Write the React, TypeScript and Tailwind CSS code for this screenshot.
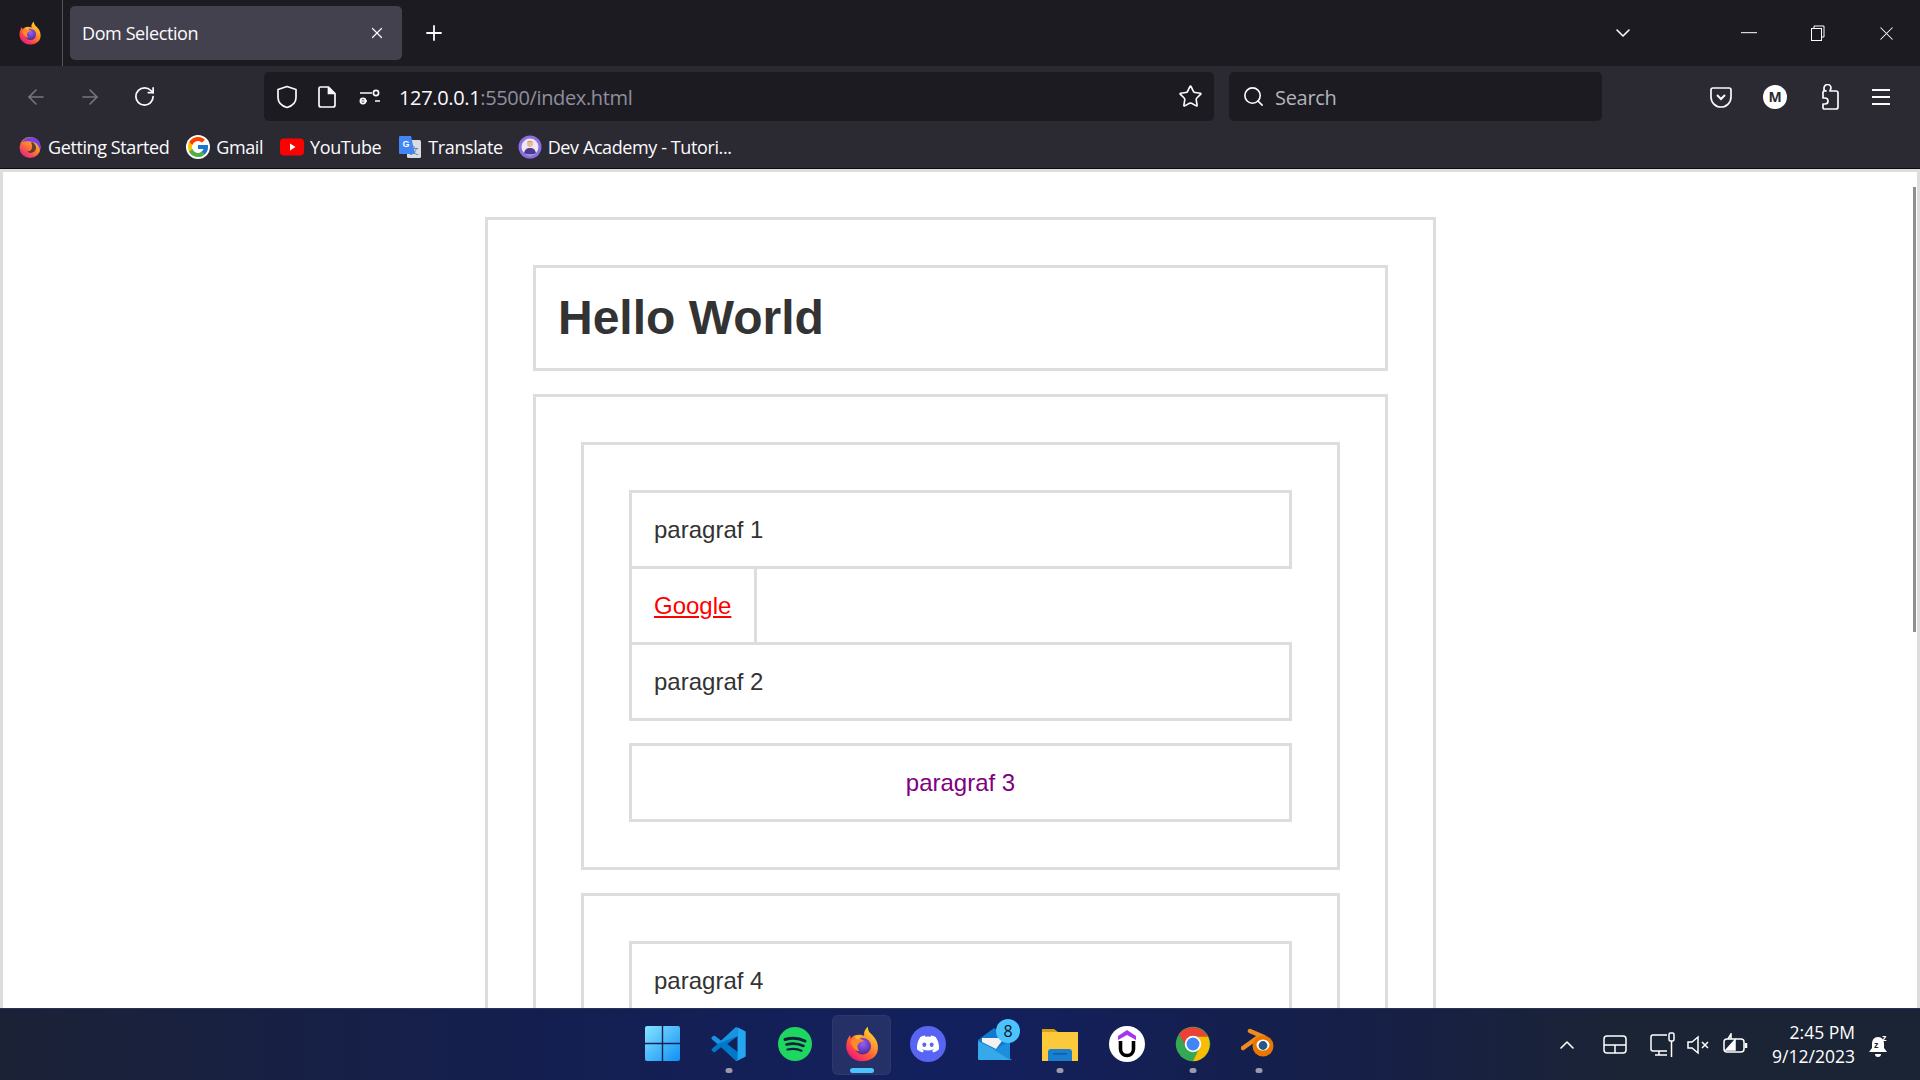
import { ArrowLeft, ArrowRight, ChevronDown, ChevronUp, Plus, RotateCw, Search, Star, X } from "lucide-react";
import { FaDiscord } from "react-icons/fa";
import { FcGoogle } from "react-icons/fc";
import type { ReactNode } from "react";

const UI_FONT = "font-['Open_Sans','Noto_Sans',sans-serif]";

function FirefoxLogo({ id, size = 24 }: { id: string; size?: number }) {
  return (
    <svg width={size} height={size} viewBox="0 0 48 48">
      <defs>
        <linearGradient id={`${id}a`} x1="0.85" y1="0.05" x2="0.2" y2="0.95">
          <stop offset="0" stopColor="#ffe226" />
          <stop offset="0.35" stopColor="#ff9a2e" />
          <stop offset="0.7" stopColor="#ff4f3f" />
          <stop offset="1" stopColor="#e8177f" />
        </linearGradient>
        <radialGradient id={`${id}b`} cx="0.5" cy="0.35" r="0.7">
          <stop offset="0" stopColor="#9a5cff" />
          <stop offset="1" stopColor="#45278d" />
        </radialGradient>
      </defs>
      <path d="M32 1c-1 7 5 9 9 15 5 7 5 15 3 20-3 7-11 11-20 11C12 47 3 38 3 27c0-6 2-11 5-15l1 5c2-3 5-5 8-5 4-1 7 0 10 1-1-5 1-9 5-12Z" fill={`url(#${id}a)`} />
      <circle cx="25" cy="27" r="11" fill={`url(#${id}b)`} />
      <path d="M9 20c3-3 7-4 11-3 3 0 6 2 8 4-4-1-7 0-9 3-2 3-1 7 2 10-6-1-11-6-12-14Z" fill="#ff8a2a" />
      <path d="M14 14c2-1 6-2 9-1l-3 5-4-1Z" fill="#ffb52e" />
    </svg>
  );
}

function GettingStartedIcon() {
  return (
    <svg width="24" height="24" viewBox="0 0 24 24">
      <defs>
        <linearGradient id="gs" x1="0.8" y1="0.1" x2="0.2" y2="0.9">
          <stop offset="0" stopColor="#ffc02e" />
          <stop offset="0.5" stopColor="#ff7a30" />
          <stop offset="1" stopColor="#e8267f" />
        </linearGradient>
      </defs>
      <circle cx="12" cy="12.5" r="10.5" fill="url(#gs)" />
      <path d="M4 7c3-5 12-7 17-1 2 3 2 7 1 9-1-4-3-7-7-8-4-1-8-1-11 0Z" fill="#7542e5" />
      <path d="M14 7c4 2 5 6 3 9-2 2-6 3-8 0 3 1 5-1 5-4 0-2 0-3-1-4Z" fill="#2b2a33" opacity="0.75" />
    </svg>
  );
}

function YoutubeIcon() {
  return (
    <svg width="24" height="18" viewBox="0 0 24 18">
      <rect width="24" height="17" y="0.5" rx="4" fill="#f00" />
      <path d="M10 5.5v7l5.5-3.5Z" fill="#fff" />
    </svg>
  );
}

function TranslateIcon() {
  return (
    <svg width="24" height="24" viewBox="0 0 24 24">
      <rect x="9" y="5" width="14" height="18" rx="1.5" fill="#d9dde3" />
      <text x="16" y="19" fontSize="9" fill="#6b7280" textAnchor="middle" fontFamily="'Noto Sans CJK SC',sans-serif">文</text>
      <path d="M2 1h11l4 18H2a1 1 0 0 1-1-1V2a1 1 0 0 1 1-1Z" fill="#4285f4" />
      <text x="8" y="12" fontSize="9" fontWeight="700" fill="#fff" textAnchor="middle" fontFamily="'Liberation Sans',sans-serif">G</text>
    </svg>
  );
}

function DevAcademyIcon() {
  return (
    <svg width="24" height="24" viewBox="0 0 24 24">
      <circle cx="12" cy="12" r="11.5" fill="#8b6fe0" />
      <circle cx="12" cy="12" r="8.5" fill="#efe6f5" />
      <circle cx="12" cy="9" r="3" fill="#e8b998" />
      <path d="M9 8c0-3 6-3 6 0l-1-1h-4Z" fill="#c9a24a" />
      <path d="M6 18c1-4 3-5 6-5s5 1 6 5c-3 2-9 2-12 0Z" fill="#4b3a8f" />
    </svg>
  );
}

function Bookmark({ icon, label, className }: { icon: ReactNode; label: string; className: string }) {
  return (
    <div className={`flex h-[28px] items-center ${className}`}>
      <span className="flex w-[24px] items-center justify-center">{icon}</span>
      <span className="ml-[6px] whitespace-nowrap text-[18px] leading-none tracking-[-0.4px] text-[#fbfbfe]">{label}</span>
    </div>
  );
}

function TitleBar() {
  return (
    <div className="flex h-[66px] items-center bg-[#1c1b22] text-[#fbfbfe]">
      <div className="flex h-full w-[63px] items-center justify-center border-r border-[#55545c] pr-[3px]">
        <FirefoxLogo id="ffmenu" size={24} />
      </div>
      <div className="ml-[7px] flex h-[54px] w-[332px] items-center rounded-[5px] bg-[#42414d] pl-[12px] pr-[16px]">
        <span className="flex-1 text-[18px] tracking-[-0.4px]">Dom Selection</span>
        <X size={18} strokeWidth={1.6} />
      </div>
      <Plus className="ml-[20px]" size={24} strokeWidth={1.8} />
      <div className="ml-auto flex items-center">
        <ChevronDown size={24} strokeWidth={1.6} />
        <svg className="ml-[106px]" width="16" height="2" viewBox="0 0 16 2">
          <rect width="16" height="1.2" fill="#d8d8dc" />
        </svg>
        <svg className="ml-[53px]" width="16" height="16" viewBox="0 0 16 16" fill="none" stroke="#fff" strokeWidth="1">
          <rect x="1.5" y="3.5" width="10" height="12" />
          <path d="M4 3.5v-2.5h10v11h-2.5" />
        </svg>
        <X className="ml-[49px] mr-[22px]" size={23} strokeWidth={1.1} />
      </div>
    </div>
  );
}

function Toolbar() {
  return (
    <div className={`flex h-[103px] flex-col border-b border-[#0c0c10] bg-[#2b2a33] ${UI_FONT}`}>
      <div className="flex h-[61px] items-center text-[#fbfbfe]">
        <ArrowLeft className="ml-[24px] text-[#77767e]" size={24} strokeWidth={1.6} />
        <ArrowRight className="ml-[30px] text-[#77767e]" size={24} strokeWidth={1.6} />
        <RotateCw className="ml-[31px]" size={23} strokeWidth={1.8} />
        <div className="ml-[108px] flex h-[49px] w-[950px] items-center rounded-[5px] bg-[#1c1b22] pl-[12px] pr-[11px]">
          <svg width="22" height="24" viewBox="0 0 22 24" fill="none" stroke="#fbfbfe" strokeWidth="1.7">
            <path d="M11 1.5 20 4.5v8c0 5-4 8.5-9 10-5-1.5-9-5-9-10v-8Z" strokeLinejoin="round" />
          </svg>
          <svg className="ml-[20px]" width="18" height="22" viewBox="0 0 18 22" fill="none" stroke="#fbfbfe" strokeWidth="1.7">
            <path d="M2.5 1h8L17 7.5V19a2 2 0 0 1-2 2H3a2 2 0 0 1-2-2V2.5A1.5 1.5 0 0 1 2.5 1Z" />
            <path d="M10.5 1v6.5H17" fill="#fbfbfe" />
          </svg>
          <svg className="ml-[23px]" width="22" height="18" viewBox="0 0 22 18" fill="none" stroke="#fbfbfe" strokeWidth="1.7">
            <path d="M1 5h12M1 13h7M16 13h5" />
            <circle cx="17" cy="5" r="2.6" />
            <circle cx="4" cy="13" r="2.6" />
          </svg>
          <span className="ml-[18px] pt-[2px] text-[20px] tracking-[-0.35px]">
            127.0.0.1<span className="text-[#8f8f9d]">:5500/index.html</span>
          </span>
          <Star className="ml-auto" size={25} strokeWidth={1.6} />
        </div>
        <div className="ml-[15px] flex h-[49px] w-[373px] items-center rounded-[5px] bg-[#1c1b22] pl-[13px]">
          <Search size={23} strokeWidth={1.7} />
          <span className="ml-[10px] pt-[2px] text-[20px] tracking-[-0.3px] text-[#b4b4bb]">Search</span>
        </div>
        <svg className="ml-[108px]" width="22" height="22" viewBox="0 0 22 22" fill="none" stroke="#fbfbfe" strokeWidth="1.7">
          <path d="M3 2h16a2 2 0 0 1 2 2v7a10 10 0 0 1-20 0V4a2 2 0 0 1 2-2Z" />
          <path d="m7 9 4 4 4-4" strokeWidth="2" />
        </svg>
        <div className="ml-[31px] flex h-[24px] w-[24px] items-center justify-center rounded-full bg-white text-[14px] font-bold leading-none text-[#2b2a33]">M</div>
        <svg className="ml-[30px]" width="22" height="26" viewBox="0 0 22 26" fill="none" stroke="#fbfbfe" strokeWidth="1.7" strokeLinejoin="round">
          <path d="M9 7H7V4a3.5 3.5 0 0 1 7 0v0l-1 3h6a2 2 0 0 1 2 2v14a2 2 0 0 1-2 2H7a1.5 1.5 0 0 1-1-1v-4h2a2.5 2.5 0 0 0 0-6H6V9a2 2 0 0 1 3-2Z" />
        </svg>
        <svg className="ml-[32px]" width="20" height="18" viewBox="0 0 20 18" fill="none" stroke="#fbfbfe" strokeWidth="2">
          <path d="M1 2h18M1 9h18M1 16h18" />
        </svg>
      </div>
      <div className="flex h-[41px] items-start pl-[18px] pt-[6px]">
        <Bookmark icon={<GettingStartedIcon />} label="Getting Started" className="" />
        <Bookmark icon={<FcGoogle size={24} className="rounded-full bg-white" />} label="Gmail" className="ml-[17px]" />
        <Bookmark icon={<YoutubeIcon />} label="YouTube" className="ml-[17px]" />
        <Bookmark icon={<TranslateIcon />} label="Translate" className="ml-[17px]" />
        <Bookmark icon={<DevAcademyIcon />} label="Dev Academy - Tutori..." className="ml-[15px]" />
      </div>
    </div>
  );
}

function Box({ children, className = "" }: { children: ReactNode; className?: string }) {
  return <div className={`border-[3px] border-[#ddd] p-[45px] ${className}`}>{children}</div>;
}

function Paragraf({ children, className = "" }: { children: ReactNode; className?: string }) {
  return <p className={`border-[3px] border-[#ddd] px-[22px] py-[23px] text-[24px] leading-[27px] ${className}`}>{children}</p>;
}

function Page() {
  return (
    <main className="relative min-h-0 flex-1 overflow-hidden border-x-[3px] border-t-[3px] border-[#ddd] bg-white pt-[45px] font-['Liberation_Sans',Arial,sans-serif] text-[#333]">
      <Box className="ml-[482px] w-[951px]">
        <div className="border-[3px] border-[#ddd] px-[22px] py-[22px]">
          <h1 className="text-[48px] font-bold leading-[56px]">Hello World</h1>
        </div>
        <Box className="mt-[23px]">
          <Box>
            <Paragraf>paragraf 1</Paragraf>
            <div className="flex h-[73px] border-l-[3px] border-[#ddd]">
              <a className="flex w-[125px] items-center border-r-[3px] border-[#ddd] pl-[22px] text-[24px] text-[#f00] underline">Google</a>
            </div>
            <Paragraf>paragraf 2</Paragraf>
            <Paragraf className="mt-[22px] text-center text-[#800080]">paragraf 3</Paragraf>
          </Box>
          <Box className="mt-[23px]">
            <Paragraf>paragraf 4</Paragraf>
          </Box>
        </Box>
      </Box>
      {/* Scrollbar thumb */}
      <div className="absolute right-[1px] top-[15px] h-[445px] w-[3px] bg-[#8f8f8f]" />
    </main>
  );
}

function VsCodeIcon() {
  return (
    <svg width="36" height="36" viewBox="0 0 100 100">
      <path fillRule="evenodd" d="M96 15 74 4a6 6 0 0 0-7 1L28 41 11 28a4 4 0 0 0-5 0l-3 3a4 4 0 0 0 0 6l15 13L3 63a4 4 0 0 0 0 6l3 3a4 4 0 0 0 5 0l17-13 39 36a6 6 0 0 0 7 1l22-11ZM74 28 45 50l29 22Z" fill="#0078c8" />
      <path fillRule="evenodd" d="M74 4l22 11v70L74 96a6 6 0 0 1-7-1c3 2 7 0 7-3Z" fill="#24a7f0" />
      <path d="M67 5 28 41 11 28a4 4 0 0 0-5 0l-3 3a4 4 0 0 0 0 6l15 13 56-22V8c0-3-4-5-7-3Z" fill="#1a94e0" />
    </svg>
  );
}

function SpotifyIcon() {
  return (
    <svg width="34" height="34" viewBox="0 0 34 34" fill="none" stroke="#14203f" strokeLinecap="round">
      <circle cx="17" cy="17" r="17" fill="#1ed760" stroke="none" />
      <path d="M7 12.5c7-2 14-1.5 20 1.5" strokeWidth="3" />
      <path d="M8.5 17.5c6-1.5 12-1 17 1.5" strokeWidth="2.6" />
      <path d="M9.5 22.5c5-1 10-.8 14 1.2" strokeWidth="2.2" />
    </svg>
  );
}

function MailIcon() {
  return (
    <div className="relative h-[36px] w-[36px]">
      <svg width="36" height="36" viewBox="0 0 36 36">
        <path d="M2 14 18 2l16 12v19H2Z" fill="#1379cc" />
        <path d="M6 12h22l-8 11-14-7Z" fill="#f2f2f2" />
        <path d="M2 15 20 24 36 34H3a1 1 0 0 1-1-1Z" fill="#35a9ea" />
        <path d="M34 15 18 24l16 10Z" fill="#1b8fdd" />
      </svg>
      <span className="absolute right-[-8px] top-[-7px] flex h-[24px] w-[24px] items-center justify-center rounded-full bg-[#4cc2ff] text-[16px] leading-none text-[#10141f]">8</span>
    </div>
  );
}

function FolderIcon() {
  return (
    <svg width="36" height="36" viewBox="0 0 36 36">
      <path d="M0 3h12l4 3h20v6H0Z" fill="#d69f12" />
      <path d="M0 6h36v29H0Z" fill="#fcc83c" />
      <path d="M6 26a3 3 0 0 1 3-3h18a3 3 0 0 1 3 3v9H6Z" fill="#1b7fd0" />
      <rect x="11" y="27" width="14" height="1.6" fill="#0e5fa6" />
    </svg>
  );
}

function UdemyIcon() {
  return (
    <svg width="36" height="36" viewBox="0 0 36 36" fill="none">
      <circle cx="18" cy="18" r="18" fill="#fff" />
      <path d="M18 4l9 6v4l-9-5-9 5v-4Z" fill="#a435f0" />
      <path d="M11.5 15v8c0 4 3 6.5 6.5 6.5s6.5-2.5 6.5-6.5v-8" stroke="#000" strokeWidth="3.6" />
    </svg>
  );
}

function ChromeIcon() {
  return (
    <svg width="36" height="36" viewBox="0 0 48 48">
      <circle cx="24" cy="24" r="23" fill="#34a853" />
      <path d="M24 14h19.9A23 23 0 0 1 24 47l8.7-18A10 10 0 0 0 24 14Z" fill="#fbbc04" />
      <path d="M24 14h19.9A23 23 0 0 0 5.2 10.8L15.3 29A10 10 0 0 1 24 14Z" fill="#ea4335" />
      <circle cx="24" cy="24" r="11" fill="#fff" />
      <circle cx="24" cy="24" r="8.6" fill="#4285f4" />
    </svg>
  );
}

function BlenderIcon() {
  return (
    <svg width="36" height="36" viewBox="0 0 36 36" fill="none">
      <path d="M2 22 16 12M9 5l14 6" stroke="#ef8a1f" strokeWidth="4.5" strokeLinecap="round" />
      <circle cx="22" cy="20" r="10.5" fill="#ea7600" />
      <ellipse cx="22" cy="19" rx="6.5" ry="5.6" fill="#fff" />
      <circle cx="22" cy="19.5" r="4.4" fill="#265787" />
    </svg>
  );
}

function WindowsIcon() {
  return (
    <svg width="35" height="35" viewBox="0 0 35 35">
      <defs>
        <linearGradient id="win" x1="0" y1="0" x2="1" y2="1">
          <stop offset="0" stopColor="#86e3ff" />
          <stop offset="1" stopColor="#0f90f5" />
        </linearGradient>
      </defs>
      <path d="M2 0h14.8v16.8H0V2a2 2 0 0 1 2-2ZM18.2 0H33a2 2 0 0 1 2 2v14.8H18.2ZM0 18.2h16.8V35H2a2 2 0 0 1-2-2ZM18.2 18.2H35V33a2 2 0 0 1-2 2H18.2Z" fill="url(#win)" />
    </svg>
  );
}

function TaskbarItem({ children, dot, active }: { children: ReactNode; dot?: boolean; active?: boolean }) {
  return (
    <div className="relative flex h-[60px] w-[66.3px] items-center justify-center">
      {active && <span className="absolute inset-y-0 left-[4px] right-[4px] rounded-[6px] border border-[#ffffff0a] bg-[#ffffff14]" />}
      <span className="relative -translate-y-[1px]">{children}</span>
      {dot && <span className="absolute bottom-[2px] left-1/2 h-[5px] w-[7px] -translate-x-1/2 rounded-full bg-[#9a9aa8]" />}
      {active && <span className="absolute bottom-[2px] left-1/2 h-[5px] w-[24px] -translate-x-1/2 rounded-full bg-[#4cc2ff]" />}
    </div>
  );
}

function Tray() {
  return (
    <div className="flex items-center justify-end text-white">
      <ChevronUp size={24} strokeWidth={1.6} />
      <svg className="ml-[24px]" width="24" height="19" viewBox="0 0 24 19" fill="none" stroke="#fff" strokeWidth="1.5">
        <rect x="1" y="1" width="22" height="17" rx="3" />
        <path d="M1 10h22M12 10v8" />
      </svg>
      <svg className="ml-[23px]" width="26" height="26" viewBox="0 0 26 26" fill="none" stroke="#fff" strokeWidth="1.5">
        <path d="M17 3H3a2 2 0 0 0-2 2v12a2 2 0 0 0 2 2h14M9 19v4M5 23h12" />
        <rect x="19" y="1" width="5" height="8" rx="1.5" />
        <path d="M21.5 9v16" />
      </svg>
      <svg className="ml-[11px]" width="24" height="20" viewBox="0 0 24 20" fill="none" stroke="#fff" strokeWidth="1.5">
        <path d="M1 7v6h4l6 5V2L5 7Z" />
        <path d="m15 7 6 6m0-6-6 6" />
      </svg>
      <svg className="ml-[12px]" width="26" height="24" viewBox="0 0 26 24" fill="none" stroke="#fff" strokeWidth="1.5">
        <rect x="1" y="6" width="20" height="13" rx="3" />
        <path d="M23 10v5" strokeWidth="2.5" />
        <path d="M3 17 12 7v10Z" fill="#fff" />
        <path d="M5 6 8 1v5" />
      </svg>
      <div className={`ml-[10px] w-[96px] -translate-y-[1px] text-right text-[17.5px] leading-[24px] ${UI_FONT}`}>
        <div>2:45 PM</div>
        <div>9/12/2023</div>
      </div>
      <svg className="ml-[13px] mr-[30px]" width="22" height="24" viewBox="0 0 22 24">
        <path d="M10 4c-4 0-6 3-6 7v4l-3 4h18l-3-4v-4c0-4-2-7-6-7Z" fill="#fff" />
        <path d="M7 21h6a3 3 0 0 1-6 0Z" fill="#fff" />
        <text x="6" y="15" fontSize="9" fontWeight="700" fill="#1a2333" fontFamily="'Liberation Sans',sans-serif">z</text>
        <text x="14" y="8" fontSize="9" fontWeight="700" fill="#fff" fontFamily="'Liberation Sans',sans-serif">z</text>
      </svg>
    </div>
  );
}

function Taskbar() {
  return (
    <footer className="grid h-[72px] grid-cols-[1fr_auto_1fr] items-center border-t border-[#2a3458] bg-[linear-gradient(90deg,#1b2236_0%,#141f50_28%,#12205e_50%,#161f48_70%,#1b2434_85%)]">
      <div />
      <div className="ml-[2px] flex items-center">
        <TaskbarItem><WindowsIcon /></TaskbarItem>
        <TaskbarItem dot><VsCodeIcon /></TaskbarItem>
        <TaskbarItem><SpotifyIcon /></TaskbarItem>
        <TaskbarItem active><FirefoxLogo id="fftask" size={36} /></TaskbarItem>
        <TaskbarItem>
          <div className="flex h-[36px] w-[36px] items-center justify-center rounded-full bg-[#5865f2] text-white">
            <FaDiscord size={24} />
          </div>
        </TaskbarItem>
        <TaskbarItem><MailIcon /></TaskbarItem>
        <TaskbarItem dot><FolderIcon /></TaskbarItem>
        <TaskbarItem><UdemyIcon /></TaskbarItem>
        <TaskbarItem dot><ChromeIcon /></TaskbarItem>
        <TaskbarItem dot><BlenderIcon /></TaskbarItem>
      </div>
      <Tray />
    </footer>
  );
}

export default function App() {
  return (
    <div className={`flex h-[1080px] w-[1920px] flex-col overflow-hidden ${UI_FONT}`}>
      <TitleBar />
      <Toolbar />
      <Page />
      <Taskbar />
    </div>
  );
}
